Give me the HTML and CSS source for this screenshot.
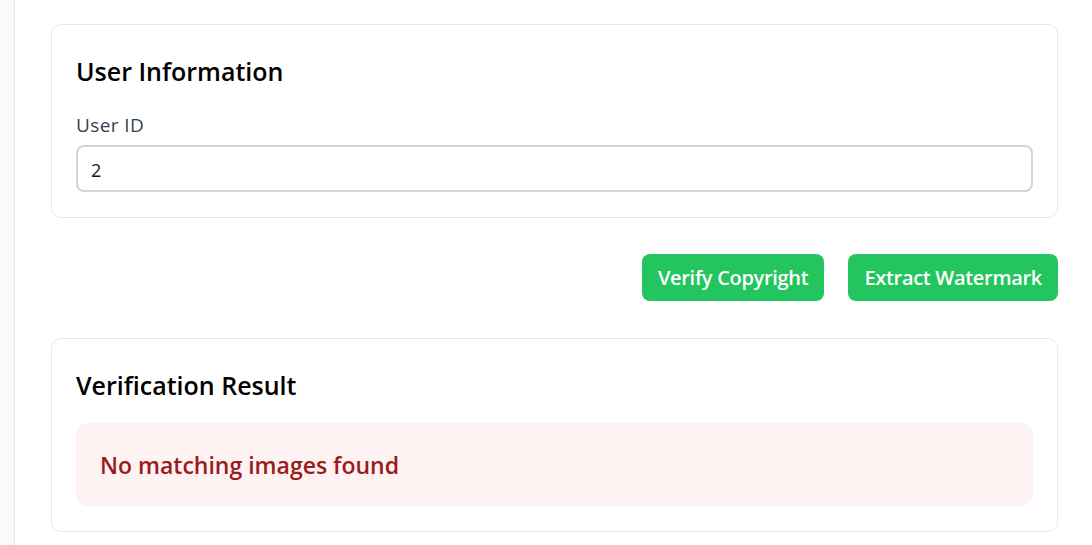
FILE: index.html
```html
<!DOCTYPE html>
<html lang="en">
<head>
<meta charset="utf-8">
<title>Verify</title>
<link rel="stylesheet" href="styles.css">
</head>
<body>
<div class="layout">
  <aside class="sidebar"></aside>
  <main class="main">
    <section class="card">
      <h2 class="card-title">User Information</h2>
      <label class="field-label" for="uid">User ID</label>
      <input class="field-input" id="uid" type="text" value="2">
    </section>
    <div class="actions">
      <button class="btn">Verify Copyright</button>
      <button class="btn">Extract Watermark</button>
    </div>
    <section class="card">
      <h2 class="card-title">Verification Result</h2>
      <div class="alert">No matching images found</div>
    </section>
  </main>
</div>
</body>
</html>
```
FILE: styles.css
```css
* { box-sizing: border-box; }
html, body { margin: 0; padding: 0; background: #ffffff; }
body {
  font-family: "Open Sans", "Noto Sans", sans-serif;
  color: #111827;
  overflow: hidden;
}
.layout {
  display: flex;
  min-height: 545px;
}
.sidebar {
  width: 15px;
  flex: 0 0 15px;
  background: #f9fafb;
  border-right: 1px solid #e5e7eb;
}
.main {
  flex: 1;
  padding: 24px 34px 0 36px;
  display: flex;
  flex-direction: column;
}
.card {
  border: 1px solid #e5e7eb;
  border-radius: 10px;
  padding: 30px 24px 25px 24px;
  background: #fff;
}
.card-title {
  margin: 0;
  font-size: 25px;
  font-weight: 600;
  line-height: 32px;
  color: #000;
}
.field-label {
  display: block;
  margin-top: 26px;
  font-size: 19px;
  line-height: 24px;
  font-weight: 500;
  color: #374151;
  letter-spacing: 0.4px;
}
.field-input {
  display: block;
  width: 100%;
  height: 47px;
  margin-top: 8px;
  padding: 2px 13px 0 13px;
  border: 2px solid #d1d5db;
  border-radius: 8px;
  font-family: inherit;
  font-size: 18px;
  color: #111827;
  background: #fff;
  outline: none;
}
.actions {
  display: flex;
  justify-content: flex-end;
  gap: 24px;
  margin: 36px 0 37px 0;
}
.btn {
  height: 47px;
  padding: 0 16px;
  border: none;
  border-radius: 8px;
  background: #22c55e;
  color: #fff;
  font-family: inherit;
  font-size: 20px;
  font-weight: 600;
  letter-spacing: -0.3px;
}
.alert {
  margin-top: 22px;
  height: 83px;
  display: flex;
  align-items: center;
  padding: 0 24px;
  background: #fef2f2;
  border-radius: 12px;
  color: #991b1b;
  font-size: 23px;
  font-weight: 600;
}
```
